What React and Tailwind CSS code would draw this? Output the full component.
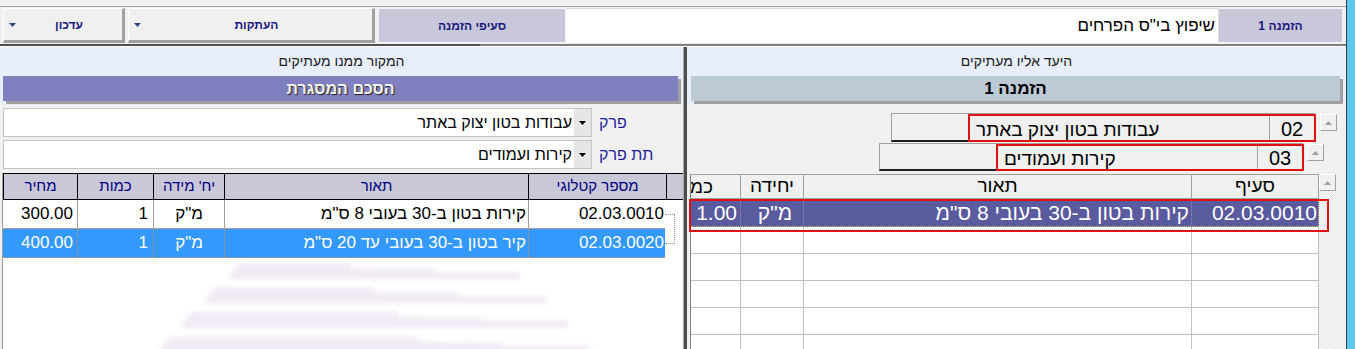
import React from 'react';

const FONT = "font-['Liberation_Sans','DejaVu_Sans',Arial,sans-serif]";

function DownArrow({ color = '#2a4a80' }) {
  return (
    <svg width="7" height="4" viewBox="0 0 7 4">
      <path d="M0 0h7L3.5 4z" fill={color} />
    </svg>
  );
}

function UpArrow() {
  return (
    <svg width="7" height="4" viewBox="0 0 7 4">
      <path d="M0 4h7L3.5 0z" fill="#a0a0a0" />
    </svg>
  );
}

function ScrollButton() {
  return (
    <div className="w-[17px] h-[17px] bg-[#f0f0f0] border border-t-white border-l-white border-r-[#a0a0a0] border-b-[#a0a0a0] flex items-center justify-center">
      <UpArrow />
    </div>
  );
}

function MenuButton({ width, label }) {
  return (
    <div
      className="h-[35px] flex items-center bg-[#f0f0f0] border-t border-l border-white border-r-[3px] border-b-[3px] border-r-[#a0a0a0] border-b-[#a0a0a0] pl-[5px]"
      style={{ width }}
    >
      <DownArrow />
      <div dir="rtl" className="flex-1 text-center text-[12px] font-bold text-[#1a1a80]">{label}</div>
    </div>
  );
}

function TopBar() {
  return (
    <div className="h-[47px] flex flex-col">
      <div className="h-[6px]" />
      <div className="h-[1px] bg-[#a0a0a0]" />
      <div className="h-[37px] flex pt-[1px] pl-[3px]">
        <MenuButton width={122} label="עדכון" />
        <div className="w-[3px]" />
        <MenuButton width={247} label="העתקות" />
        <div className="w-[3px]" />
        <div dir="rtl" className="w-[188px] h-[35px] bg-[#c8c8da] border border-[#f4f4f8] flex items-center justify-center text-[12px] font-bold text-[#1a1a80]">
          סעיפי הזמנה
        </div>
        <div dir="rtl" className="w-[652px] h-[35px] bg-white border-t border-[#d8d8d8] flex items-center pr-[3px] text-[17px] text-black">
          שיפוץ בי"ס הפרחים
        </div>
        <div dir="rtl" className="w-[125px] h-[35px] bg-[#c8c8da] border border-[#f4f4f8] border-l-[#dcdcdc] flex items-center justify-center text-[12px] font-bold text-[#1a1a80]">
          הזמנה 1
        </div>
      </div>
      <div className="h-[2px] flex">
        <div className="w-[480px] bg-[#505050]" />
        <div className="flex-1 bg-[#808080]" />
      </div>
      <div className="h-[1px] bg-white" />
    </div>
  );
}

function SelectField({ label, value }) {
  return (
    <div className="h-[29px] flex items-center">
      <div className="w-[589px] h-full bg-white border border-[#c4c4c4] flex">
        <div dir="rtl" className="flex-1 flex items-center pr-[2px] text-[16px] text-black">{value}</div>
        <div className="w-[17px] bg-[#e6e6e6] flex items-center justify-center">
          <DownArrow color="#000000" />
        </div>
      </div>
      <div dir="rtl" className="ml-[7px] text-[16px] text-[#1c1c9c]">{label}</div>
    </div>
  );
}

const srcCols = [75, 76, 71, 304, 136];

const srcRows = [
  { price: '300.00', qty: '1', unit: 'מ"ק', desc: 'קירות בטון ב-30 בעובי 8 ס"מ', cat: '02.03.0010' },
  { price: '400.00', qty: '1', unit: 'מ"ק', desc: 'קיר בטון ב-30 בעובי עד 20 ס"מ', cat: '02.03.0020' },
];

function Watermark() {
  const stripes = [
    { L: 227, t: 263, b: 279, M: 348, N: 432, R: 520 },
    { L: 203, t: 287, b: 303, M: 370, N: 455, R: 546 },
    { L: 180, t: 312, b: 328, M: 395, N: 480, R: 568 },
    { L: 158, t: 337, b: 353, M: 415, N: 500, R: 590 },
  ];
  return (
    <svg width="680" height="89" viewBox="0 0 680 89" className="block">
      <defs>
        <filter id="wmblur" x="-10%" y="-50%" width="120%" height="200%">
          <feGaussianBlur stdDeviation="2.4" />
        </filter>
      </defs>
      <g filter="url(#wmblur)" fill="#f1e9f4">
        {stripes.map((s, i) => {
          const dx = -3;
          const dy = -260;
          const pts = [
            [s.L + 12, s.t],
            [s.M, s.t],
            [s.M + 5, s.t + 5],
            [s.N, s.t + 6],
            [s.N + 5, s.t + 9],
            [s.R, s.t + 9],
            [s.R, s.b],
            [s.L, s.b],
          ]
            .map(([x, y]) => `${x + dx},${y + dy}`)
            .join(' ');
          return <polygon key={i} points={pts} />;
        })}
      </g>
    </svg>
  );
}

function SourcePanel() {
  return (
    <div className="w-[684px] flex flex-col border-r border-[#a8a8a8]">
      <div className="h-[58px] bg-[#e8eefc] flex flex-col">
        <div dir="rtl" className="h-[29px] flex items-center justify-center text-[14px] text-[#202020]">
          המקור ממנו מעתיקים
        </div>
        <div
          dir="rtl"
          className="ml-[3px] w-[675px] h-[25px] bg-[#8080c0] shadow-[3px_3px_0_#a0a0a0] flex items-center justify-center text-[16px] font-bold text-[#f2f2f2] [text-shadow:1px_1px_1px_#202020]"
        >
          הסכם המסגרת
        </div>
      </div>

      <div className="flex flex-col gap-[3px] pt-[3px] pb-[4px] pl-[3px]">
        <SelectField label="פרק" value="עבודות בטון יצוק באתר" />
        <SelectField label="תת פרק" value="קירות ועמודים" />
      </div>

      <div className="flex-1 ml-[2px] border-l border-[#a0a0a0] bg-white flex flex-col overflow-hidden">
        <div className="h-[30px] flex bg-[#c8c8d8] border-t border-b border-black text-[15px] text-[#000080]">
          {['מחיר', 'כמות', "יח' מידה", 'תאור', 'מספר קטלוגי'].map((h, i) => (
            <div
              key={h}
              dir="rtl"
              className={`flex items-center justify-center border-r border-black ${i === 0 ? 'border-l' : ''}`}
              style={{ width: i === 4 ? 138 : srcCols[i] }}
            >
              {h}
            </div>
          ))}
          <div className="flex-1" />
        </div>

        <div className="flex">
          <div className="w-[662px] flex flex-col">
            {srcRows.map((r, i) => {
              const sel = i === 1;
              const cell = sel
                ? 'border-r border-dotted border-[#c89060]'
                : 'border-r border-[#a0a0a0]';
              return (
                <div
                  key={r.cat}
                  className={`h-[29px] flex text-[17px] ${sel ? 'bg-[#3399ff] text-white border-b border-dotted border-[#c89060]' : 'bg-white text-black border-b border-[#a0a0a0]'}`}
                >
                  <div className={`w-[75px] flex items-center justify-end pr-[4px] ${cell}`}>{r.price}</div>
                  <div className={`w-[76px] flex items-center justify-end pr-[5px] ${cell}`}>{r.qty}</div>
                  <div dir="rtl" className={`w-[71px] flex items-center justify-center ${cell}`}>{r.unit}</div>
                  <div dir="rtl" className={`w-[304px] flex items-center pr-[2px] ${cell}`}>{r.desc}</div>
                  <div className="flex-1 flex items-center justify-end pr-[1px]">{r.cat}</div>
                </div>
              );
            })}
          </div>
          <div className="flex-1">
            <div className="mt-[14px] w-[10px] h-[30px] border-t border-r border-b border-dotted border-[#909090]" />
          </div>
        </div>

        <div className="pt-[2px]">
          <Watermark />
        </div>
      </div>
    </div>
  );
}

function ChapterRow({ boxLeft, code, text, gap, right }) {
  return (
    <div className="h-full flex justify-end items-start" style={{ paddingRight: right }}>
      <div className="w-[424px] h-full flex bg-[#f0f0f0] border-t border-l border-[#a0a0a0] border-b-2 border-b-[#202020]">
        <div style={{ width: boxLeft }} />
        <div className="flex-1 flex border-2 border-[#e01010] -mb-[2px] -mr-[1px]">
          <div dir="rtl" className="flex-1 flex items-center justify-end pl-[6px] pt-[2px] text-[19px] text-black leading-none">
            {text}
          </div>
          <div className="w-[45px] border-l border-[#a0a0a0] flex items-center justify-center pt-[1px] text-[20px] text-black">
            {code}
          </div>
        </div>
      </div>
      <div style={{ width: gap }} />
      <div className="pt-[1px]">
        <ScrollButton />
      </div>
    </div>
  );
}

const tgtCols = [50, 63, 388, 127];

function TargetPanel() {
  const emptyRows = [0, 1, 2, 3, 4];
  return (
    <div className="flex-1 flex flex-col">
      <div className="h-[58px] bg-[#e8eefc] flex flex-col">
        <div dir="rtl" className="h-[29px] flex items-center justify-center text-[14px] text-[#202020]">
          היעד אליו מעתיקים
        </div>
        <div
          dir="rtl"
          className="ml-[4px] w-[649px] h-[25px] bg-[#bccad6] shadow-[3px_3px_0_#a0a0a0] flex items-center justify-center text-[17px] font-bold text-black"
        >
          הזמנה 1
        </div>
      </div>

      <div className="flex flex-col pt-[8px] pb-[3px]">
        <div className="h-[29px]">
          <ChapterRow boxLeft={76} code="02" text="עבודות בטון יצוק באתר" gap={5} right={9} />
        </div>
        <div className="h-[28px] mt-[1px]">
          <ChapterRow boxLeft={116} code="03" text="קירות ועמודים" gap={4} right={22} />
        </div>
      </div>

      <div className="flex-1 flex pl-[3px] relative overflow-hidden">
        <div className="w-[629px] border-l border-[#808080] bg-white flex flex-col">
          <div className="h-[25px] flex bg-[#f0f0f0] border-t border-b border-[#a0a0a0] text-[19px] text-black">
            <div dir="rtl" className="w-[50px] border-r border-[#a0a0a0] overflow-hidden whitespace-nowrap text-right pr-[27px] leading-[23px]">
              כמות
            </div>
            <div dir="rtl" className="w-[63px] border-r border-[#a0a0a0] flex items-center justify-center">יחידה</div>
            <div dir="rtl" className="w-[388px] border-r border-[#a0a0a0] flex items-center justify-center">תאור</div>
            <div dir="rtl" className="w-[127px] border-r border-[#a0a0a0] flex items-center justify-center">סעיף</div>
          </div>

          <div className="h-[28px] flex bg-[#5a5a9e] text-white text-[21px] border-b border-dotted border-[#d0c060]">
            <div className="w-[50px] border-r border-dotted border-[#9090b0] flex items-center justify-end pr-[3px]">1.00</div>
            <div dir="rtl" className="w-[63px] border-r border-dotted border-[#9090b0] flex items-center justify-center pl-[6px]">מ"ק</div>
            <div dir="rtl" className="w-[388px] border-r border-dotted border-[#9090b0] flex items-center pr-[2px]">
              קירות בטון ב-30 בעובי 8 ס"מ
            </div>
            <div className="w-[127px] border-r border-dotted border-[#d0c060] flex items-center justify-end pr-[1px]">02.03.0010</div>
          </div>

          {emptyRows.map((r) => (
            <div key={r} className="h-[27px] flex shrink-0 border-b border-[#c0c0c0]">
              {tgtCols.map((w, i) => (
                <div key={i} className="border-r border-[#c0c0c0]" style={{ width: w }} />
              ))}
            </div>
          ))}
        </div>

        <div className="w-[17px] flex flex-col">
          <ScrollButton />
          <div className="flex-1 bg-[repeating-conic-gradient(#e6e6e6_0_25%,#fbfbfb_0_50%)] bg-[length:2px_2px]" />
        </div>
        <div className="w-[10px]" />

        <div className="absolute left-[2px] top-[25px] w-[640px] h-[33px] border-2 border-[#e01010] pointer-events-none" />
      </div>
    </div>
  );
}

export default function App() {
  return (
    <div className={`w-[1355px] h-[349px] flex overflow-hidden bg-[#f0f0f0] ${FONT}`}>
      <div className="w-[1346px] flex flex-col">
        <TopBar />
        <div className="flex flex-1 min-h-0">
          <SourcePanel />
          <div className="w-[3px] bg-[#4e4e4e]" />
          <TargetPanel />
        </div>
      </div>
      <div className="w-[9px] border-l border-[#3a3a3a] bg-[#5dc8ec]" />
    </div>
  );
}
